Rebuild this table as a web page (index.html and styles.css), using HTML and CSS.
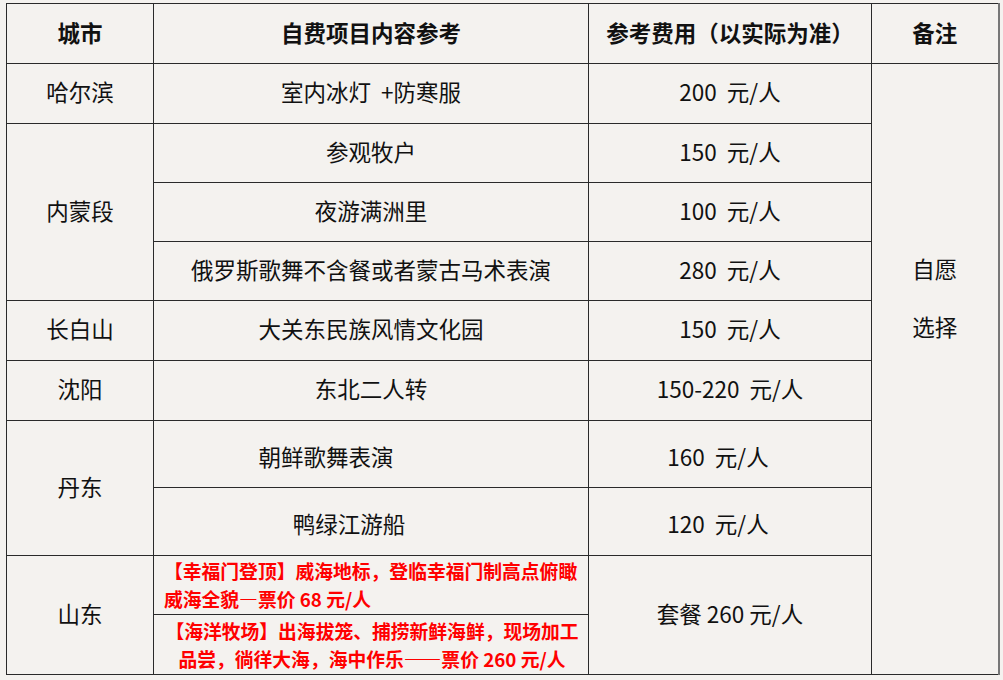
FILE: index.html
```html
<!DOCTYPE html>
<html lang="zh-CN">
<head>
<meta charset="utf-8">
<title>自费项目</title>
<link rel="stylesheet" href="styles.css">
</head>
<body>
<table class="sheet">
  <colgroup>
    <col class="c1"><col class="c2"><col class="c3"><col class="c4">
  </colgroup>
  <tr class="h60 head">
    <th>城市</th><th>自费项目内容参考</th><th>参考费用（以实际为准）</th><th>备注</th>
  </tr>
  <tr class="h60">
    <td>哈尔滨</td><td>室内冰灯&nbsp;&nbsp;+防寒服</td><td>200&nbsp;&nbsp;元/人</td>
    <td rowspan="10" class="note"><p>自愿<br>选择</p></td>
  </tr>
  <tr class="h59">
    <td rowspan="3">内蒙段</td><td>参观牧户</td><td>150&nbsp;&nbsp;元/人</td>
  </tr>
  <tr class="h59">
    <td>夜游满洲里</td><td>100&nbsp;&nbsp;元/人</td>
  </tr>
  <tr class="h59">
    <td>俄罗斯歌舞不含餐或者蒙古马术表演</td><td>280&nbsp;&nbsp;元/人</td>
  </tr>
  <tr class="h60">
    <td>长白山</td><td>大关东民族风情文化园</td><td>150&nbsp;&nbsp;元/人</td>
  </tr>
  <tr class="h60">
    <td>沈阳</td><td>东北二人转</td><td>150-220&nbsp;&nbsp;元/人</td>
  </tr>
  <tr class="h67">
    <td rowspan="2">丹东</td><td class="low shift-a">朝鲜歌舞表演</td><td class="low shift-p">160&nbsp;&nbsp;元/人</td>
  </tr>
  <tr class="h68">
    <td class="low shift-b">鸭绿江游船</td><td class="low shift-p">120&nbsp;&nbsp;元/人</td>
  </tr>
  <tr class="h59">
    <td rowspan="2">山东</td>
    <td class="red left">【幸福门登顶】威海地标，登临幸福门制高点俯瞰威海全貌—票价 68 元/人</td>
    <td rowspan="2">套餐 260 元/人</td>
  </tr>
  <tr class="h60">
    <td class="red">【海洋牧场】出海拔笼、捕捞新鲜海鲜，现场加工品尝，徜徉大海，海中作乐——票价 260 元/人</td>
  </tr>
</table>
</body>
</html>
```

FILE: styles.css
```css
html, body {
  margin: 0;
  padding: 0;
  background: #f4f2ef;
}
body {
  padding: 3px 0 0 6px;
  width: 1003px;
  height: 680px;
  box-sizing: border-box;
  font-family: "Microsoft YaHei", "Noto Sans CJK SC", "Noto Sans", sans-serif;
  color: #111;
  overflow: hidden;
}
.sheet {
  border-collapse: collapse;
  table-layout: fixed;
  width: 992px;
  border-right: 2px solid #777;
}
.c1 { width: 147px; }
.c2 { width: 435px; }
.c3 { width: 283px; }
.c4 { width: 127px; }
th, td {
  border: 1px solid #2a2a2a;
  padding: 0 0 5px 0;
  text-align: center;
  vertical-align: middle;
  font-size: 22.5px;
  line-height: 30px;
  font-weight: 400;
}
th {
  font-weight: 700;
  padding-bottom: 4px;
}
.h60 { height: 60px; }
.h59 { height: 59px; }
.h67 { height: 67px; }
.h68 { height: 68px; }
.low { padding-top: 6px; padding-bottom: 3px; }
.shift-a { padding-right: 90px; }
.shift-b { padding-right: 44px; }
.shift-p { padding-right: 24px; }
.note {
  vertical-align: top;
  padding-top: 175px;
}
.note p {
  margin: 0;
  line-height: 58px;
}
.red {
  color: #f00;
  font-size: 18.8px;
  line-height: 28px;
  font-weight: 700;
  padding: 0 8px 0 10px;
}
.left { text-align: left; }
```
